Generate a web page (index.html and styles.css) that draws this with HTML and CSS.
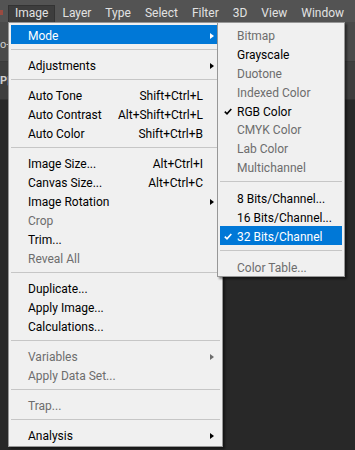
FILE: index.html
```html
<!DOCTYPE html>
<html>
<head>
<meta charset="utf-8">
<link rel="stylesheet" href="styles.css">
</head>
<body>
<div class="app">
  <div class="menubar">
    <span class="logo-edge"></span>
    <span class="mb-item active">Image</span>
    <span class="mb-item">Layer</span>
    <span class="mb-item">Type</span>
    <span class="mb-item">Select</span>
    <span class="mb-item">Filter</span>
    <span class="mb-item">3D</span>
    <span class="mb-item">View</span>
    <span class="mb-item">Window</span>
  </div>
  <div class="workspace">
    <div class="optbar"><span class="frag">o-</span></div>
    <div class="tabbar"><span class="frag frag2">P|</span></div>
    <div class="canvas"></div>
  </div>

  <div class="menu main">
    <div class="row hl"><span class="chk"></span><span class="lbl">Mode</span><span class="sc"></span><span class="arr"><i class="tri"></i></span></div>
    <div class="sep"></div>
    <div class="row"><span class="chk"></span><span class="lbl">Adjustments</span><span class="sc"></span><span class="arr"><i class="tri"></i></span></div>
    <div class="sep"></div>
    <div class="row"><span class="chk"></span><span class="lbl">Auto Tone</span><span class="sc">Shift+Ctrl+L</span><span class="arr"></span></div>
    <div class="row"><span class="chk"></span><span class="lbl">Auto Contrast</span><span class="sc">Alt+Shift+Ctrl+L</span><span class="arr"></span></div>
    <div class="row"><span class="chk"></span><span class="lbl">Auto Color</span><span class="sc">Shift+Ctrl+B</span><span class="arr"></span></div>
    <div class="sep"></div>
    <div class="row"><span class="chk"></span><span class="lbl">Image Size...</span><span class="sc">Alt+Ctrl+I</span><span class="arr"></span></div>
    <div class="row"><span class="chk"></span><span class="lbl">Canvas Size...</span><span class="sc">Alt+Ctrl+C</span><span class="arr"></span></div>
    <div class="row"><span class="chk"></span><span class="lbl">Image Rotation</span><span class="sc"></span><span class="arr"><i class="tri"></i></span></div>
    <div class="row dis"><span class="chk"></span><span class="lbl">Crop</span><span class="sc"></span><span class="arr"></span></div>
    <div class="row"><span class="chk"></span><span class="lbl">Trim...</span><span class="sc"></span><span class="arr"></span></div>
    <div class="row dis"><span class="chk"></span><span class="lbl">Reveal All</span><span class="sc"></span><span class="arr"></span></div>
    <div class="sep"></div>
    <div class="row"><span class="chk"></span><span class="lbl">Duplicate...</span><span class="sc"></span><span class="arr"></span></div>
    <div class="row"><span class="chk"></span><span class="lbl">Apply Image...</span><span class="sc"></span><span class="arr"></span></div>
    <div class="row"><span class="chk"></span><span class="lbl">Calculations...</span><span class="sc"></span><span class="arr"></span></div>
    <div class="sep"></div>
    <div class="row dis"><span class="chk"></span><span class="lbl">Variables</span><span class="sc"></span><span class="arr"><i class="tri"></i></span></div>
    <div class="row dis"><span class="chk"></span><span class="lbl">Apply Data Set...</span><span class="sc"></span><span class="arr"></span></div>
    <div class="sep"></div>
    <div class="row dis"><span class="chk"></span><span class="lbl">Trap...</span><span class="sc"></span><span class="arr"></span></div>
    <div class="sep"></div>
    <div class="row"><span class="chk"></span><span class="lbl">Analysis</span><span class="sc"></span><span class="arr"><i class="tri"></i></span></div>
  </div>

  <div class="menu sub">
    <div class="row dis"><span class="chk"></span><span class="lbl">Bitmap</span></div>
    <div class="row"><span class="chk"></span><span class="lbl">Grayscale</span></div>
    <div class="row dis"><span class="chk"></span><span class="lbl">Duotone</span></div>
    <div class="row dis"><span class="chk"></span><span class="lbl">Indexed Color</span></div>
    <div class="row"><span class="chk"><svg class="ck" width="8" height="7" viewBox="0 0 8 7"><path d="M0.8 3.6 L3 5.8 L7.3 1" fill="none" stroke="currentColor" stroke-width="1.6"/></svg></span><span class="lbl">RGB Color</span></div>
    <div class="row dis"><span class="chk"></span><span class="lbl">CMYK Color</span></div>
    <div class="row dis"><span class="chk"></span><span class="lbl">Lab Color</span></div>
    <div class="row dis"><span class="chk"></span><span class="lbl">Multichannel</span></div>
    <div class="sep sep12"></div>
    <div class="row"><span class="chk"></span><span class="lbl">8 Bits/Channel...</span></div>
    <div class="row"><span class="chk"></span><span class="lbl">16 Bits/Channel...</span></div>
    <div class="row hl"><span class="chk"><svg class="ck" width="8" height="7" viewBox="0 0 8 7"><path d="M0.8 3.6 L3 5.8 L7.3 1" fill="none" stroke="currentColor" stroke-width="1.6"/></svg></span><span class="lbl">32 Bits/Channel</span></div>
    <div class="sep sep12"></div>
    <div class="row dis"><span class="chk"></span><span class="lbl">Color Table...</span></div>
  </div>
</div>
</body>
</html>
```

FILE: styles.css
```css
* { box-sizing: border-box; }
html, body { margin: 0; padding: 0; }
body {
  background: #282828;
  font-family: Roboto, "Liberation Sans", sans-serif;
  font-size: 12px;
  width: 355px;
  height: 450px;
  overflow: hidden;
}
.app {
  position: relative;
  width: 355px;
  height: 450px;
  display: flex;
  flex-direction: column;
}
.menubar {
  height: 22px;
  background: #535353;
  display: flex;
  align-items: flex-end;
  flex: none;
}
.logo-edge {
  width: 3px;
  height: 5px;
  background: #9a4a40;
  align-self: flex-start;
  margin-top: 10px;
  margin-right: 5px;
}
.mb-item {
  color: #e2e2e2;
  height: 17px;
  line-height: 16px;
  padding: 0 7px;
}
.mb-item.active {
  background: #3d3d3d;
  border: 1px solid #333;
  border-bottom: none;
  padding: 0 6px;
  line-height: 15px;
}
.workspace {
  flex: 1;
  display: flex;
  flex-direction: column;
}
.optbar {
  height: 40px;
  background: #4a4a4a;
  border-bottom: 1px solid #3a3a3a;
  display: flex;
  align-items: flex-start;
  padding-top: 16px;
}
.tabbar {
  height: 38px;
  background: #3e3e3e;
  border-bottom: 1px solid #333;
  display: flex;
  align-items: center;
}
.frag {
  color: #cfcfcf;
  font-size: 11px;
  line-height: 13px;
}
.frag2 { font-weight: bold; }
.canvas { flex: 1; background: #282828; }

.menu {
  position: absolute;
  top: 22px;
  background: #f0f0f0;
  border: 1px solid #979797;
  box-shadow: 2px 2px 2px rgba(0,0,0,0.45);
  padding: 2px;
  color: #000;
}
.main { left: 8px; width: 215px; }
.sub { left: 217px; width: 128px; padding-bottom: 0; }

.row {
  height: 19px;
  padding-top: 3px;
  display: grid;
  grid-template-columns: 17px 1fr auto 17px;
  align-items: center;
  white-space: nowrap;
}
.sub .row { height: 18.9px; grid-template-columns: 17px 1fr; }
.row.hl { background: #0078d7; color: #fff; }
.row.dis { color: #6d6d6d; }
.lbl { line-height: 16px; }
.sc { text-align: right; line-height: 16px; }
.arr { display: flex; justify-content: center; align-items: center; }
.tri {
  display: block;
  width: 0; height: 0;
  border-left: 4px solid currentColor;
  border-top: 3.5px solid transparent;
  border-bottom: 3.5px solid transparent;
  margin-left: 1px;
}
.chk { display: flex; align-items: center; padding-left: 4px; }
.ck { display: block; }
.sep {
  height: 1px;
  background: #c6c6c6;
  margin: 5px 0;
}
.sep12 { margin: 5px 0 6px; }
```
